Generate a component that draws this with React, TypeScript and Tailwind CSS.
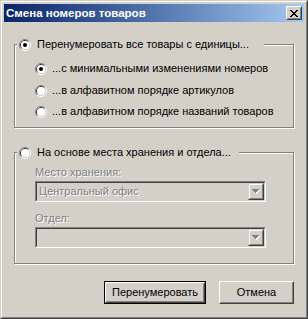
import React from 'react';

const face = 'bg-[#d4d0c8]';

const Radio: React.FC<{ checked?: boolean }> = ({ checked }) => (
  <svg width="12" height="12" viewBox="0 0 12 12" className="shrink-0">
    <path d="M2.11 9.89 A5.5 5.5 0 0 1 9.89 2.11" fill="none" stroke="#808080" />
    <path d="M9.89 2.11 A5.5 5.5 0 0 1 2.11 9.89" fill="none" stroke="#ffffff" />
    <path d="M2.82 9.18 A4.5 4.5 0 0 1 9.18 2.82" fill="none" stroke="#404040" />
    <path d="M9.18 2.82 A4.5 4.5 0 0 1 2.82 9.18" fill="none" stroke="#d4d0c8" />
    <circle cx="6" cy="6" r="4" fill="#ffffff" />
    {checked && <circle cx="6" cy="6" r="2" fill="#000000" />}
  </svg>
);

const RadioRow: React.FC<{ label: string; checked?: boolean; className?: string }> = ({
  label,
  checked,
  className
}) => (
  <div className={['flex items-center h-[13px]', className].filter(Boolean).join(' ')}>
    <Radio checked={checked} />
    <span className="ml-[5px] leading-[13px] whitespace-nowrap">{label}</span>
  </div>
);

const GroupBox: React.FC<{
  legend: string;
  legendWidth: string;
  checked?: boolean;
  className?: string;
  children: React.ReactNode;
}> = ({ legend, legendWidth, checked, className, children }) => (
  <div
    className={[
      'border border-[#808080] shadow-[inset_1px_1px_0_#fff,1px_1px_0_#fff]',
      className
    ].filter(Boolean).join(' ')}
  >
    <div className={['-mt-[7px] ml-[2px] pl-[2px] h-[13px] flex items-center', face, legendWidth].join(' ')}>
      <Radio checked={checked} />
      <span className="ml-[6px] leading-[13px] whitespace-nowrap">{legend}</span>
    </div>
    {children}
  </div>
);

const DisabledCombo: React.FC<{ value?: string; className?: string }> = ({ value, className }) => (
  <div
    className={[
      'ml-[20px] w-[231px] h-[21px] border border-t-[#808080] border-l-[#808080] border-r-white border-b-white',
      className
    ].filter(Boolean).join(' ')}
  >
    <div className="h-full border border-t-[#404040] border-l-[#404040] border-r-[#d4d0c8] border-b-[#d4d0c8] bg-[#d4d0c8] flex items-center">
      <span className="flex-1 pl-[2px] text-[#808080] [text-shadow:1px_1px_0_#fff] leading-[13px] whitespace-nowrap">
        {value}
      </span>
      <div className="w-[16px] h-full border border-t-[#d4d0c8] border-l-[#d4d0c8] border-r-[#404040] border-b-[#404040]">
        <div className="h-full border border-t-white border-l-white border-r-[#808080] border-b-[#808080] flex items-center justify-center">
          <svg width="8" height="5" viewBox="0 0 8 5">
            <path d="M1 1 h7 v1 h-1 v1 h-1 v1 h-1 v1 h-1 z" fill="#ffffff" />
            <path d="M0 0 h7 v1 h-1 v1 h-1 v1 h-1 v1 h-1 v-1 h-1 v-1 h-1 v-1 h-1 z" fill="#808080" />
          </svg>
        </div>
      </div>
    </div>
  </div>
);

const Button: React.FC<{ label: string; isDefault?: boolean; className?: string }> = ({
  label,
  isDefault,
  className
}) => (
  <div
    className={[
      'h-[23px]',
      isDefault ? 'border border-black' : '',
      className
    ].filter(Boolean).join(' ')}
  >
    <div className="h-full border border-t-white border-l-white border-r-[#404040] border-b-[#404040]">
      <div className="h-full border border-t-[#d4d0c8] border-l-[#d4d0c8] border-r-[#808080] border-b-[#808080] flex items-center justify-center">
        <span className="leading-[13px] whitespace-nowrap">{label}</span>
      </div>
    </div>
  </div>
);

export default function App() {
  return (
    <div className="w-[308px] h-[319px] font-['Liberation_Sans',sans-serif] text-[11px] text-black">
      <div className="h-full border border-t-[#d4d0c8] border-l-[#d4d0c8] border-r-[#404040] border-b-[#404040]">
        <div className={['h-full border border-t-white border-l-white border-r-[#808080] border-b-[#808080] p-[2px] flex flex-col', face].join(' ')}>
          {/* title bar */}
          <div className="h-[18px] shrink-0 flex items-center bg-gradient-to-r from-[#0a246a] to-[#a6caf0] pl-[2px] pr-[2px]">
            <span className="flex-1 text-white font-bold text-[11.5px] leading-[13px] whitespace-nowrap">Смена номеров товаров</span>
            <div className={['w-[16px] h-[14px] border border-t-white border-l-white border-r-[#404040] border-b-[#404040]', face].join(' ')}>
              <div className="h-full border border-t-[#d4d0c8] border-l-[#d4d0c8] border-r-[#808080] border-b-[#808080] flex items-center justify-center">
                <svg width="8" height="7" viewBox="0 0 8 7">
                  <path d="M0 0 L7 7 M1 0 L8 7 M7 0 L0 7 M8 0 L1 7" stroke="#000" strokeWidth="1" shapeRendering="crispEdges" />
                </svg>
              </div>
            </div>
          </div>

          {/* content */}
          <div className="flex-1 px-[10px] flex flex-col">
            <GroupBox
              legend="Перенумеровать все товары с единицы..."
              legendWidth="w-[247px]"
              checked
              className="mt-[22px] pb-[9px]"
            >
              <RadioRow className="ml-[20px] mt-[11px]" label="...с минимальными изменениями номеров" checked />
              <RadioRow className="ml-[20px] mt-[9px]" label="...в алфавитном порядке артикулов" />
              <RadioRow className="ml-[20px] mt-[8px]" label="...в алфавитном порядке названий товаров" />
            </GroupBox>

            <GroupBox
              legend="На основе места хранения и отдела..."
              legendWidth="w-[222px]"
              className="mt-[24px] pb-[15px]"
            >
              <div className="ml-[20px] mt-[7px] h-[13px] leading-[13px] text-[#808080] [text-shadow:1px_1px_0_#fff]">
                Место хранения:
              </div>
              <DisabledCombo className="mt-[2px]" value="Центральный офис" />
              <div className="ml-[20px] mt-[10px] h-[13px] leading-[13px] text-[#808080] [text-shadow:1px_1px_0_#fff]">
                Отдел:
              </div>
              <DisabledCombo className="mt-[2px]" />
            </GroupBox>

            <div className="mt-[17px] flex justify-end gap-[13px]">
              <Button label="Перенумеровать" isDefault className="w-[102px]" />
              <Button label="Отмена" className="w-[75px]" />
            </div>
          </div>
        </div>
      </div>
    </div>
  );
}
